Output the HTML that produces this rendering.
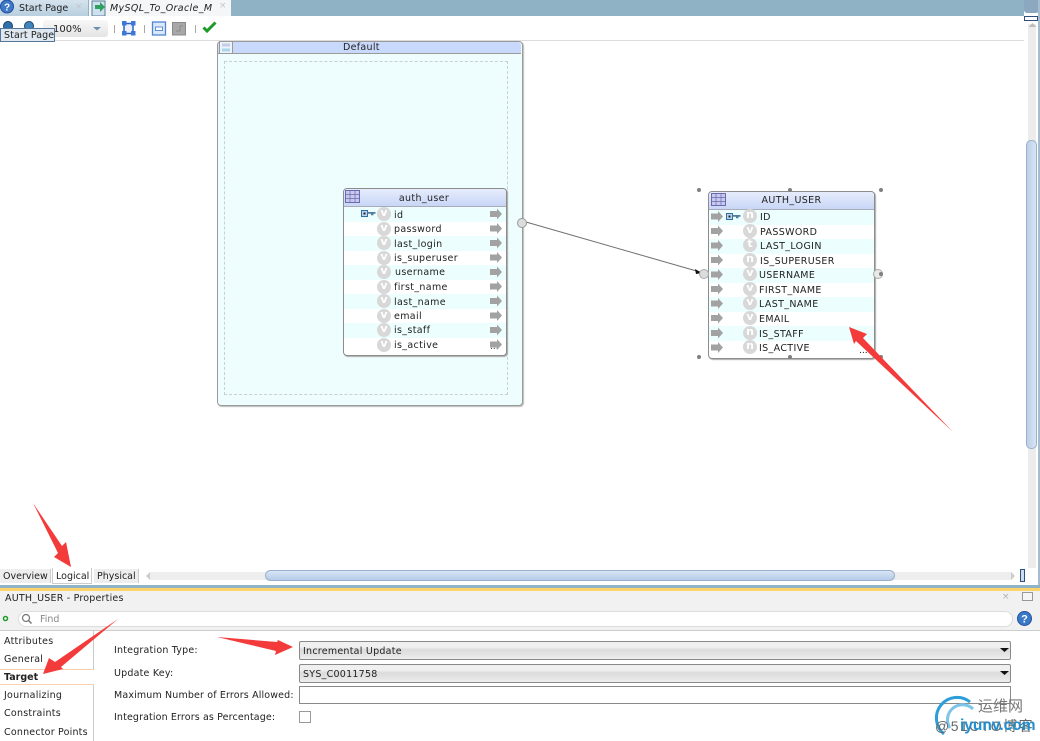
<!DOCTYPE html>
<html><head><meta charset="utf-8"><style>
html,body{margin:0;padding:0;background:#fff}
#p{position:relative;width:1040px;height:741px;overflow:hidden;background:#fff;font-family:"DejaVu Sans","Liberation Sans",sans-serif;font-size:9.5px;color:#222}
#p div{position:absolute;white-space:nowrap}
.r{height:14.56px}
.c{background:#edfefe}
.t{line-height:14px;font-size:9.5px;letter-spacing:.35px;margin-top:1px}
.t2{line-height:14px;font-size:9.5px;letter-spacing:.35px;margin-top:2px}
.v{width:14px;height:14px;border-radius:7px;background:#d8d8d8;color:#fff;text-align:center;line-height:12px;font-size:11px;font-weight:bold}
.lb{left:114px;font-size:9.5px;line-height:12px}
.sd{left:4px;font-size:9.5px;letter-spacing:.25px;line-height:12px}
.sel{left:299px;width:710px;height:17px;border:1px solid #8a8a8a;border-radius:2px;background:linear-gradient(#f0f0f0 0,#f0f0f0 30%,#dcdcdc 45%,#e2e2e2 70%,#efefef 100%);line-height:19px;text-indent:3px;font-size:9.5px;letter-spacing:.25px}
</style></head><body><div id="p">

<!-- top tab bar -->
<div style="left:0;top:0;width:1024px;height:16px;background:#8fb3c4"></div>
<div style="left:0;top:0;width:88px;height:16px;background:linear-gradient(#d5e3ee,#b9cfdf)"></div>
<div style="left:89px;top:0;width:142px;height:16px;background:#f4f6f8"></div>
<div style="left:19px;top:1px;font-size:9.5px;line-height:14px;letter-spacing:0;margin-top:1px">Start Page</div>
<div style="left:75px;top:1px;font-size:9px;color:#bcc8d0;line-height:12px">×</div>
<div style="left:110px;top:1px;font-size:9.5px;font-style:italic;line-height:14px;letter-spacing:.35px;margin-top:1px">MySQL_To_Oracle_M</div>
<div style="left:219px;top:0;font-size:9px;color:#c4c8cc;line-height:12px">×</div>
<svg style="position:absolute;left:0;top:0" width="110" height="16">
<circle cx="7" cy="6.500" r="6.500" fill="#3f78c8" stroke="#24509a"/>
<text x="7" y="10.500" font-size="10" font-weight="bold" fill="#fff" text-anchor="middle" font-family="Liberation Sans">?</text>
<rect x="92" y="1" width="13" height="15" fill="#cfe0ee" stroke="#5a7f96"/>
<path d="M95 5h5V2l5 5-5 5V9h-5z" fill="#2fa060"/>
</svg>

<!-- toolbar -->
<div style="left:0;top:16px;width:1024px;height:24px;background:#fff;border-bottom:1px solid #dcdcdc"></div>
<div style="left:43px;top:20px;width:65px;height:17px;background:linear-gradient(#f8f8f8,#e4e4e4);border-radius:3px"></div>
<div style="left:53px;top:24px;font-size:10px;line-height:12px">100%</div>
<svg style="position:absolute;left:0;top:16px" width="225" height="24">
<circle cx="8" cy="10" r="4.500" fill="#2f6fae" stroke="#1f3f66"/>
<circle cx="29" cy="10" r="4.500" fill="#3f86c0" stroke="#1f3f66"/>
<path d="M93 11h8l-4 3.500z" fill="#6f8fb0"/>
<path d="M114.500 9v8M144.500 9v8M195.500 9v8" stroke="#a8a8a8"/>
<rect x="124" y="7.500" width="9" height="10" fill="#eaf1fc" stroke="#2a62c0" stroke-width="1.500"/>
<rect x="122" y="5" width="4.500" height="4.500" fill="#3d78d8"/><rect x="131" y="5" width="4.500" height="4.500" fill="#3d78d8"/><rect x="122" y="15" width="4.500" height="4.500" fill="#3d78d8"/><rect x="131" y="15" width="4.500" height="4.500" fill="#3d78d8"/>
<rect x="152.500" y="6" width="13" height="13" fill="#dbe8fb" stroke="#4f86d0" stroke-width="1.300"/><rect x="155.500" y="11" width="7" height="3.500" fill="#fff" stroke="#4f86d0" stroke-width=".9"/>
<rect x="172.500" y="6.500" width="13" height="12.500" fill="#a8a8a8" stroke="#8a8a8a"/><path d="M176 15h4v-5h3" fill="none" stroke="#8c8c8c"/>
<path d="M203.500 11.500l3.500 3.500 8.500-8.500" fill="none" stroke="#1e9a28" stroke-width="3"/>
</svg>
<div style="left:0;top:28px;height:12px;width:53px;background:#dfe8f0;border:1px solid #55789a;font-size:9.5px;line-height:13px;text-indent:3px;letter-spacing:.1px">Start Page</div>

<!-- Default container -->
<div style="left:217px;top:41px;width:304px;height:363px;background:#eefefe;border:1px solid #9a9a9a;border-radius:4px;box-shadow:1px 1px 1px #bbb"></div>
<div style="left:218px;top:42px;width:303px;height:11px;background:#c9d9fb;border-bottom:1px solid #9a9a9a;border-radius:3px 3px 0 0"></div>
<svg style="position:absolute;left:219px;top:41px" width="15" height="14"><rect x=".5" y=".5" width="13" height="12" fill="#eef2fa" stroke="#999"/><rect x="3" y="2.500" width="8" height="3" fill="#c4cfe6"/><rect x="3" y="7.500" width="8" height="3" fill="#a8d8ea"/></svg>
<div style="left:343px;top:42px;font-size:9.5px;line-height:12px;letter-spacing:.3px">Default</div>
<div style="left:224px;top:61px;width:282px;height:332px;border:1px dashed #c8d0d0"></div>

<!-- connector -->
<svg style="position:absolute;left:0;top:0" width="1040" height="741">
<path d="M526 222L700 272" stroke="#707070" stroke-width="1" fill="none"/>
<path d="M702 273l-7-4 1 5z" fill="#111"/>
<circle cx="522" cy="223" r="4.500" fill="#dcdcdc" stroke="#999"/>
</svg>

<!-- auth_user -->
<div style="left:343px;top:188px;width:162px;height:166px;background:#fff;border:1px solid #8c8c8c;border-radius:4px;box-shadow:1px 1px 1px #aaa;overflow:hidden">
<div style="left:0;top:0;width:162px;height:17px;background:linear-gradient(#e6ecfc,#c8d6f6);border-bottom:1px solid #aab"></div>
<div class="t" style="left:-1px;width:162px;top:2px;text-align:center">auth_user</div>
<svg style="position:absolute;left:1px;top:1px" width="15" height="13"><rect x=".5" y=".5" width="14" height="12" fill="#c9c9ee" stroke="#6a6ab0"/><path d="M5 .5v12M10 .5v12M.5 4.500h14M.5 8.500h14" stroke="#6a6ab0" stroke-width=".7"/></svg>
<div class="r c" style="top:18px;left:0;width:162px"></div>
<div class="r c" style="top:47px;left:0;width:162px"></div>
<div class="r c" style="top:76px;left:0;width:162px"></div>
<div class="r c" style="top:105px;left:0;width:162px"></div>
<div class="r c" style="top:134px;left:0;width:162px"></div>
</div>
<div class="v" style="left:377px;top:207px">v</div><div class="t" style="left:394px;top:208px">id</div>
<div class="v" style="left:377px;top:222px">v</div><div class="t" style="left:394px;top:222px">password</div>
<div class="v" style="left:377px;top:236px">v</div><div class="t" style="left:394px;top:237px">last_login</div>
<div class="v" style="left:377px;top:251px">v</div><div class="t" style="left:394px;top:251px">is_superuser</div>
<div class="v" style="left:377px;top:265px">v</div><div class="t" style="left:395px;top:265px">username</div>
<div class="v" style="left:377px;top:280px">v</div><div class="t" style="left:394px;top:280px">first_name</div>
<div class="v" style="left:377px;top:294px">v</div><div class="t" style="left:394px;top:295px">last_name</div>
<div class="v" style="left:377px;top:309px">v</div><div class="t" style="left:394px;top:309px">email</div>
<div class="v" style="left:377px;top:323px">v</div><div class="t" style="left:394px;top:323px">is_staff</div>
<div class="v" style="left:377px;top:338px">v</div><div class="t" style="left:394px;top:338px">is_active</div>

<!-- AUTH_USER -->
<div style="left:708px;top:191px;width:165px;height:166px;background:#fff;border:1px solid #8c8c8c;border-radius:4px;box-shadow:1px 1px 1px #aaa;overflow:hidden">
<div style="left:0;top:0;width:165px;height:17px;background:linear-gradient(#e6ecfc,#c8d6f6);border-bottom:1px solid #aab"></div>
<div class="t" style="left:0;width:165px;top:1px;text-align:center">AUTH_USER</div>
<svg style="position:absolute;left:2px;top:1px" width="15" height="13"><rect x=".5" y=".5" width="14" height="12" fill="#c9c9ee" stroke="#6a6ab0"/><path d="M5 .5v12M10 .5v12M.5 4.500h14M.5 8.500h14" stroke="#6a6ab0" stroke-width=".7"/></svg>
<div class="r c" style="top:18px;left:0;width:165px"></div>
<div class="r c" style="top:47px;left:0;width:165px"></div>
<div class="r c" style="top:76px;left:0;width:165px"></div>
<div class="r c" style="top:105px;left:0;width:165px"></div>
<div class="r c" style="top:134px;left:0;width:165px"></div>
</div>
<div class="v" style="left:743px;top:209px">n</div><div class="t2" style="left:760px;top:209px">ID</div>
<div class="v" style="left:743px;top:224px">v</div><div class="t2" style="left:760px;top:224px">PASSWORD</div>
<div class="v" style="left:743px;top:238px">t</div><div class="t2" style="left:760px;top:238px">LAST_LOGIN</div>
<div class="v" style="left:743px;top:253px">n</div><div class="t2" style="left:760px;top:253px">IS_SUPERUSER</div>
<div class="v" style="left:743px;top:267px">v</div><div class="t2" style="left:759px;top:267px">USERNAME</div>
<div class="v" style="left:743px;top:282px">v</div><div class="t2" style="left:759px;top:282px">FIRST_NAME</div>
<div class="v" style="left:743px;top:296px">v</div><div class="t2" style="left:759px;top:296px">LAST_NAME</div>
<div class="v" style="left:743px;top:311px">v</div><div class="t2" style="left:759px;top:311px">EMAIL</div>
<div class="v" style="left:743px;top:326px">n</div><div class="t2" style="left:759px;top:326px">IS_STAFF</div>
<div class="v" style="left:743px;top:340px">n</div><div class="t2" style="left:759px;top:340px">IS_ACTIVE</div>
<div style="left:859px;top:346px;font-size:9px;line-height:10px;color:#111">...</div>
<div style="left:490px;top:342px;font-size:9px;line-height:10px;color:#333">...</div>

<svg style="position:absolute;left:0;top:0" width="1040" height="741">
<defs><path id="ar" d="M0 -3h7v-2.500l5 5.500-5 5.500v-2.500h-7z" fill="#a2a2a2"/>
<g id="key"><rect x=".5" y=".5" width="6" height="6" fill="#bcd4f0" stroke="#2f6f9f"/><rect x="2.500" y="2.500" width="2" height="2" fill="#222"/><path d="M6.500 2h8v1.800h-2v1.500h-2.500v-1.500h-3.500z" fill="#4f7f9f"/></g></defs>
<use href="#ar" x="490" y="214"/><use href="#ar" x="490" y="228.500"/><use href="#ar" x="490" y="243"/><use href="#ar" x="490" y="257.500"/><use href="#ar" x="490" y="272"/><use href="#ar" x="490" y="286.500"/><use href="#ar" x="490" y="301"/><use href="#ar" x="490" y="315.500"/><use href="#ar" x="490" y="330"/><use href="#ar" x="490" y="344.500"/>
<use href="#ar" x="711" y="216.500"/><use href="#ar" x="711" y="231"/><use href="#ar" x="711" y="245.500"/><use href="#ar" x="711" y="260"/><use href="#ar" x="711" y="274.500"/><use href="#ar" x="711" y="289"/><use href="#ar" x="711" y="303.500"/><use href="#ar" x="711" y="318"/><use href="#ar" x="711" y="333"/><use href="#ar" x="711" y="347.500"/>
<use href="#key" x="361" y="210"/><use href="#key" x="726" y="213"/>
<g fill="#808080"><circle cx="699" cy="190" r="2"/><circle cx="790" cy="190" r="2"/><circle cx="881" cy="190" r="2"/><circle cx="699" cy="357" r="2"/><circle cx="790" cy="357" r="2"/><circle cx="881" cy="357" r="2"/></g>
<circle cx="704" cy="274" r="4.500" fill="#dcdcdc" stroke="#aaa"/>
<circle cx="878" cy="274" r="4.500" fill="#e8e8e8" stroke="#aaa"/>
<circle cx="881" cy="274" r="2" fill="#808080"/>
</svg>

<!-- vertical scrollbar -->
<div style="left:1024px;top:0;width:15px;height:13px;background:#8ba8c0;border-radius:0 0 3px 3px"></div>
<div style="left:1024px;top:16px;width:12px;height:3px;border:1px solid #2f4f80"></div>
<div style="left:1028px;top:24px;width:8px;height:544px;background:#ececec"></div>
<svg style="position:absolute;left:1028px;top:22px" width="9" height="6"><path d="M4.500 1l4 4h-8z" fill="#bdbdbd"/></svg>
<div style="left:1026px;top:140px;width:11px;height:309px;background:linear-gradient(90deg,#bcd0e8,#d8e4f4);border:1px solid #9ab0cc;border-radius:5px;box-sizing:border-box"></div>
<div style="left:1038px;top:0;width:2px;height:585px;background:#a6bcd0"></div>

<!-- bottom tabs & h scrollbar -->
<div style="left:0;top:569px;width:50px;height:14px;background:#eee;border-right:1px solid #ccc;font-size:9.5px;line-height:16px;text-indent:3px">Overview</div>
<div style="left:52px;top:568px;width:38px;height:15px;background:#fff;border:1px solid #ccc;border-top:0;font-size:9.5px;line-height:17px;text-indent:3px">Logical</div>
<div style="left:94px;top:569px;width:44px;height:14px;background:#eee;border-right:1px solid #ccc;font-size:9.5px;line-height:16px;text-indent:3px">Physical</div>
<div style="left:150px;top:572px;width:862px;height:8px;background:#eee"></div>
<div style="left:265px;top:570px;width:630px;height:11px;background:linear-gradient(#d8e6f6,#b4cae6);border:1px solid #9ab0cc;border-radius:6px;box-sizing:border-box"></div>
<div style="left:1020px;top:569px;width:3px;height:11px;border:1px solid #2f4f80;background:#cde"></div>
<svg style="position:absolute;left:144px;top:570px" width="880" height="12"><path d="M2 6l4-4v8z" fill="#ccc"/><path d="M867 2l4 4-4 4z" fill="#ccc"/></svg>

<!-- properties panel -->
<div style="left:0;top:585px;width:1040px;height:3px;background:#8fb3c4"></div>
<div style="left:0;top:588px;width:1040px;height:3px;background:#fbd36b"></div>
<div style="left:0;top:591px;width:1040px;height:17px;background:#f1f1f1"></div>
<div style="left:5px;top:592px;font-size:9.5px;line-height:14px;letter-spacing:.2px">AUTH_USER - Properties</div>
<div style="left:1002px;top:591px;font-size:9px;color:#b0b0b0;line-height:13px">×</div>
<div style="left:1022px;top:592px;width:9px;height:7px;border:1px solid #999;background:#f5f5f5"></div>
<div style="left:0;top:608px;width:1040px;height:22px;background:#f1f1f1;border-bottom:1px solid #ccc"></div>
<div style="left:18px;top:611px;width:993px;height:14px;background:#fff;border:1px solid #ddd;border-radius:8px"></div>
<div style="left:40px;top:613px;font-size:9.5px;color:#888;line-height:13px">Find</div>
<svg style="position:absolute;left:0;top:608px" width="40" height="22"><circle cx="5.500" cy="10.500" r="2" fill="#fff" stroke="#1e9a28" stroke-width="1.500"/><circle cx="26" cy="10" r="3.500" fill="none" stroke="#777" stroke-width="1.200"/><path d="M28.500 12.500l3 3" stroke="#777" stroke-width="1.500"/></svg>
<svg style="position:absolute;left:1016px;top:610px" width="18" height="18"><circle cx="8.500" cy="8.500" r="7" fill="#3a78c8" stroke="#24509a"/><text x="8.500" y="12.500" font-size="11" font-weight="bold" fill="#fff" text-anchor="middle" font-family="Liberation Sans">?</text></svg>

<!-- left nav -->
<div style="left:93px;top:631px;width:1px;height:110px;background:#ccc"></div>
<div style="left:0;top:669px;width:94px;height:14px;background:#fff;border-top:1px solid #f8cfb0;border-bottom:1px solid #f8cfb0"></div>
<div class="sd" style="top:636px">Attributes</div>
<div class="sd" style="top:654px">General</div>
<div class="sd" style="top:672px;font-weight:bold;letter-spacing:0">Target</div>
<div class="sd" style="top:690px">Journalizing</div>
<div class="sd" style="top:708px">Constraints</div>
<div class="sd" style="top:727px;letter-spacing:.2px">Connector Points</div>

<!-- form -->
<div class="lb" style="top:645px;letter-spacing:.2px">Integration Type:</div>
<div class="lb" style="top:668px;letter-spacing:.2px">Update Key:</div>
<div class="lb" style="top:690px;letter-spacing:.15px">Maximum Number of Errors Allowed:</div>
<div class="lb" style="top:712px;letter-spacing:.13px">Integration Errors as Percentage:</div>
<div class="sel" style="top:641px">Incremental Update</div>
<div class="sel" style="top:664px">SYS_C0011758</div>
<div style="left:299px;top:686px;width:710px;height:16px;border:1px solid #8a8a8a;background:#fff"></div>
<div style="left:299px;top:711px;width:10px;height:10px;border:1px solid #999;background:#fff"></div>
<svg style="position:absolute;left:1000px;top:648px" width="10" height="30"><path d="M0 0h9l-4.500 4zM0 23h9l-4.500 4z" fill="#111"/></svg>

<!-- watermark -->
<svg style="position:absolute;left:930px;top:690px" width="110" height="51">
<path d="M40 12A19 19 0 0 0 14 44" fill="none" stroke="#2d9fd8" stroke-width="3"/>
<path d="M43 19A15 15 0 0 0 20 38" fill="none" stroke="#7cc4e8" stroke-width="3"/>
</svg>
<div style="left:978px;top:699px;font-family:'Liberation Sans','Noto Sans CJK SC',sans-serif;font-size:15px;line-height:16px;color:#777">运维网</div>
<div style="left:935px;top:718px;font-family:'Liberation Sans','Noto Sans CJK SC',sans-serif;font-size:14px;line-height:16px;color:#666;letter-spacing:1.500px">@51CTO博客</div>
<div style="left:960px;top:717px;font-family:'Liberation Sans',sans-serif;font-size:15.500px;font-weight:bold;line-height:17px;color:#1f8fd0">iyunv.com</div>

<!-- red arrows -->
<svg style="position:absolute;left:0;top:0" width="1040" height="741">
<g fill="#f43b3b">
<path d="M849 327L867 334 863 338 953 432 856 341 854 344z"/>
<path d="M71 567L54 557 58 553 33 503 62 546 66 542z"/>
<path d="M43 674L49 658 55 662 118 619 61 667 63 669z"/>
<path d="M293 647L278 640 277 642 217 637 276 651 275 655z"/>
</g>
</svg>
</div></body></html>
